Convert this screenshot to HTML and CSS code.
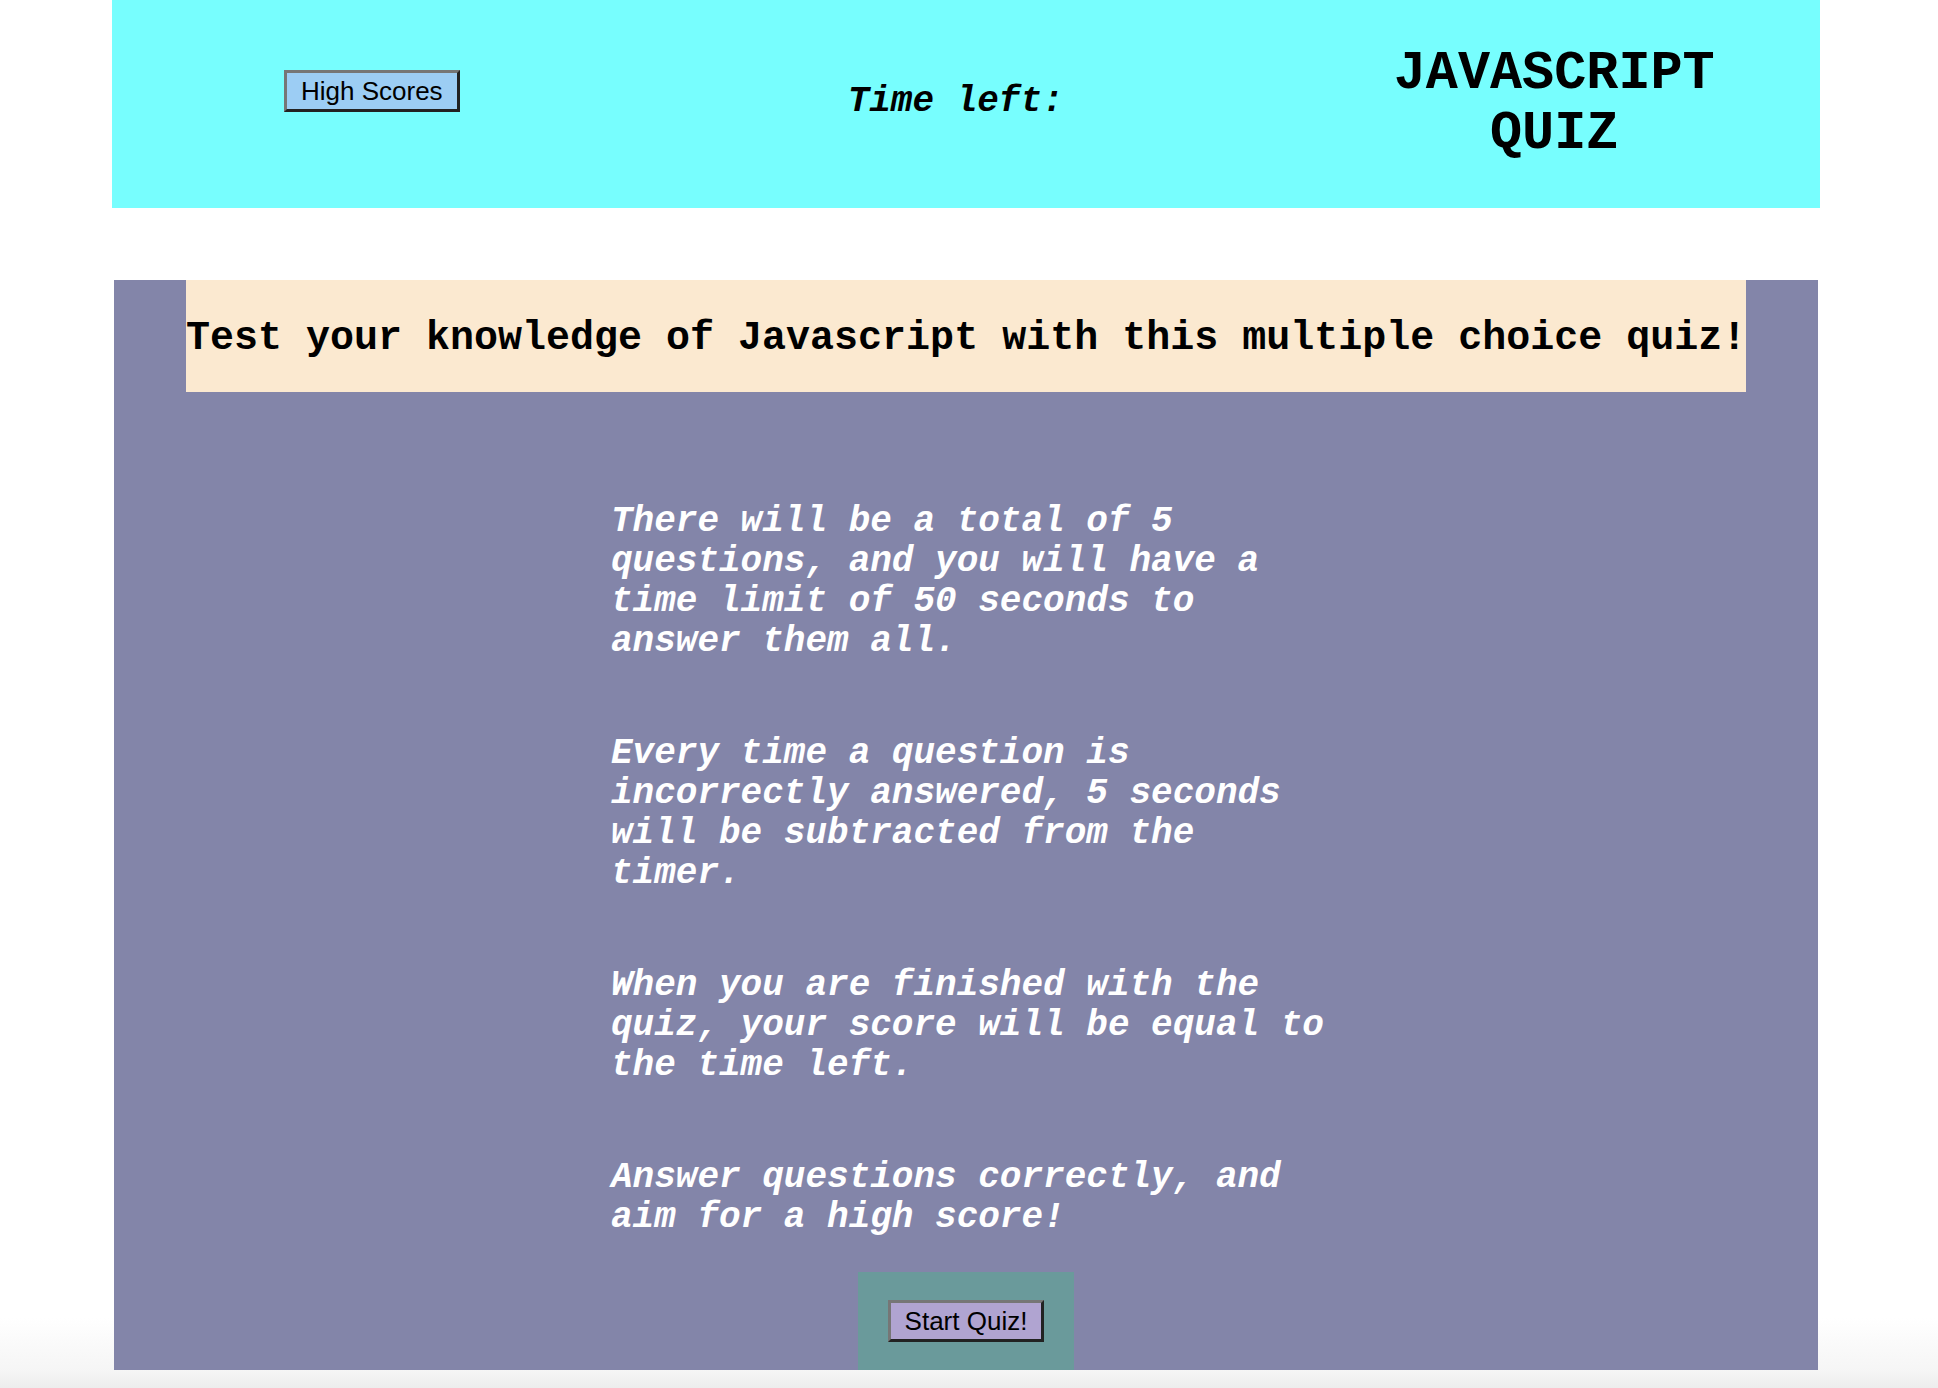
FILE: index.html
```html
<!DOCTYPE html>
<html lang="en">
<head>
<meta charset="utf-8">
<title>Javascript Quiz</title>
<link rel="stylesheet" href="styles.css">
</head>
<body>
<div class="page">
  <header class="topbar">
    <button class="btn btn-scores">High Scores</button>
    <div class="timer">Time left:</div>
    <h1 class="title">JAVASCRIPT QUIZ</h1>
  </header>
  <main class="quiz">
    <h2 class="banner">Test your knowledge of Javascript with this multiple choice quiz!</h2>
    <div class="rules">
      <p>There will be a total of 5 questions, and you will have a time limit of 50 seconds to answer them all.</p>
      <p>Every time a question is incorrectly answered, 5 seconds will be subtracted from the timer.</p>
      <p>When you are finished with the quiz, your score will be equal to the time left.</p>
      <p>Answer questions correctly, and aim for a high score!</p>
    </div>
    <div class="start-box">
      <button class="btn btn-start">Start Quiz!</button>
    </div>
  </main>
</div>
<div class="scroll-fade"></div>
</body>
</html>
```

FILE: styles.css
```css
html, body {
  margin: 0;
  height: 100%;
  overflow: hidden;
}

body {
  background: linear-gradient(to bottom, #ffffff calc(100% - 70px), #f2f2f2 100%);
  font-family: "Liberation Mono", "Courier New", monospace;
  color: #000;
}

.page {
  width: 1708px;
  margin-left: 112px;
}

.topbar {
  height: 208px;
  box-sizing: border-box;
  background: #77fefe;
  display: flex;
  align-items: flex-start;
  padding-left: 172px;
}

.btn {
  font-family: "Liberation Sans", Arial, sans-serif;
  font-size: 26px;
  line-height: 30px;
  padding: 3px 14px;
  border: 3px solid;
  border-color: #767676 #222222 #222222 #767676;
  border-radius: 0;
  color: #000;
  margin: 0;
}

.btn-scores {
  background: #9ccdf4;
  margin-top: 70px;
}

.btn-start {
  background: #b0a4d1;
  display: block;
}

.timer {
  margin: 82px 0 0 388px;
  font-size: 36px;
  line-height: 40px;
  font-weight: bold;
  font-style: italic;
}

.title {
  margin: 44px 0 0 330px;
  width: 10ch;
  font-size: 53.5px;
  line-height: 60px;
  font-weight: bold;
  text-align: center;
}

.quiz {
  margin: 72px 2px 0;
  height: 1108px;
  box-sizing: border-box;
  background: #8385a9;
  display: flow-root;
}

.banner {
  margin: 0 72px;
  padding: 36px 0 31px;
  background: #fbe9d0;
  font-size: 40px;
  line-height: 45px;
  font-weight: bold;
  text-align: center;
  white-space: nowrap;
  overflow: visible;
}

.rules {
  margin: 110px 0 0 497px;
  width: 722px;
  color: #ffffff;
  font-size: 36px;
  line-height: 40px;
  font-weight: bold;
  font-style: italic;
}

.rules p {
  margin: 0 0 72px;
}

.rules p:last-child {
  margin-bottom: 0;
}

.start-box {
  width: fit-content;
  margin: 34px auto 0;
  padding: 28px 30px 46px;
  background: #6a9a9b;
}

.scroll-fade {
  position: fixed;
  left: 0;
  right: 0;
  bottom: 0;
  height: 18px;
  background: linear-gradient(to bottom, #f6f6f6, #ededed);
}
```
